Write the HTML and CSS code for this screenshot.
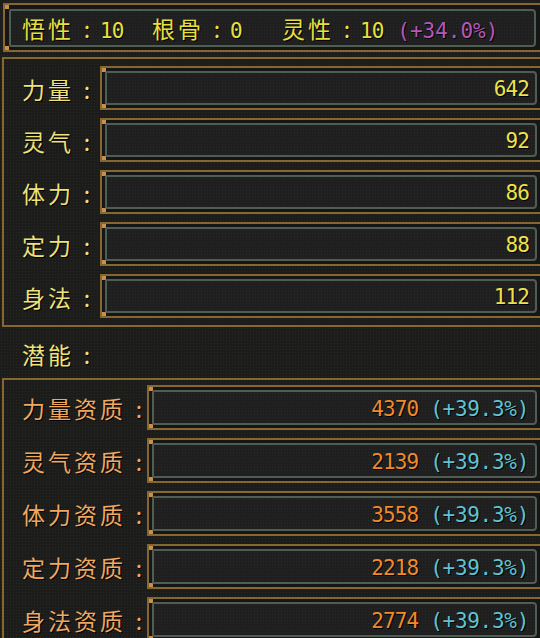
FILE: index.html
```html
<!DOCTYPE html>
<html lang="zh-CN">
<head>
    <meta charset="UTF-8">
    <meta name="viewport" content="width=device-width, initial-scale=1.0">
    <title>属性</title>
    <link rel="stylesheet" href="styles.css">
</head>
<body>
    <div class="screen">
        <div class="frame top-frame">
            <div class="frame-inner attrs">
                <span class="attr"><span class="cn">悟性<i>:</i></span><span class="num">10</span></span>
                <span class="attr"><span class="cn">根骨<i>:</i></span><span class="num">0</span></span>
                <span class="attr"><span class="cn">灵性<i>:</i></span><span class="num">10 <em class="purple">(+34.0%)</em></span></span>
            </div>
        </div>

        <section class="panel stats">
            <div class="row">
                <span class="label cn">力量<i>:</i></span>
                <div class="frame bar"><div class="frame-inner"><span class="num">642</span></div></div>
            </div>
            <div class="row">
                <span class="label cn">灵气<i>:</i></span>
                <div class="frame bar"><div class="frame-inner"><span class="num">92</span></div></div>
            </div>
            <div class="row">
                <span class="label cn">体力<i>:</i></span>
                <div class="frame bar"><div class="frame-inner"><span class="num">86</span></div></div>
            </div>
            <div class="row">
                <span class="label cn">定力<i>:</i></span>
                <div class="frame bar"><div class="frame-inner"><span class="num">88</span></div></div>
            </div>
            <div class="row">
                <span class="label cn">身法<i>:</i></span>
                <div class="frame bar"><div class="frame-inner"><span class="num">112</span></div></div>
            </div>
        </section>

        <div class="section-title cn">潜能<i>:</i></div>

        <section class="panel potential">
            <div class="row">
                <span class="label cn">力量资质<i>:</i></span>
                <div class="frame bar"><div class="frame-inner"><span class="num orange">4370</span><span class="num cyan">(+39.3%)</span></div></div>
            </div>
            <div class="row">
                <span class="label cn">灵气资质<i>:</i></span>
                <div class="frame bar"><div class="frame-inner"><span class="num orange">2139</span><span class="num cyan">(+39.3%)</span></div></div>
            </div>
            <div class="row">
                <span class="label cn">体力资质<i>:</i></span>
                <div class="frame bar"><div class="frame-inner"><span class="num orange">3558</span><span class="num cyan">(+39.3%)</span></div></div>
            </div>
            <div class="row">
                <span class="label cn">定力资质<i>:</i></span>
                <div class="frame bar"><div class="frame-inner"><span class="num orange">2218</span><span class="num cyan">(+39.3%)</span></div></div>
            </div>
            <div class="row">
                <span class="label cn">身法资质<i>:</i></span>
                <div class="frame bar"><div class="frame-inner"><span class="num orange">2774</span><span class="num cyan">(+39.3%)</span></div></div>
            </div>
        </section>
    </div>
</body>
</html>
```

FILE: styles.css
```css
html, body {
    margin: 0;
    padding: 0;
}

body {
    width: 540px;
    height: 638px;
    overflow: hidden;
    background-color: #1c1c1b;
    background-image: radial-gradient(rgba(255, 255, 255, 0.05) 1px, transparent 1px);
    background-size: 3px 3px;
}

.screen {
    width: 540px;
    padding-top: 3px;
}

.cn {
    font-family: "Noto Sans CJK SC", sans-serif;
    font-size: 23px;
    letter-spacing: 3px;
    line-height: 1;
    color: #efe27a;
    text-shadow: 1px 1px 0 #000;
    white-space: nowrap;
}

/* centred colon cell, like the full-width colon of the game font */
.cn i {
    display: inline-block;
    width: 26px;
    text-align: center;
    font-style: normal;
    letter-spacing: 0;
}

.num {
    font-family: "DejaVu Sans Mono", monospace;
    font-size: 21px;
    letter-spacing: -0.9px;
    line-height: 1;
    color: #efe04c;
    text-shadow: 1px 1px 0 #000;
    white-space: nowrap;
}

.num em {
    font-style: normal;
}

.purple {
    color: #b556b8;
    margin-left: 2px;
    letter-spacing: 0;
}

.orange {
    color: #f08a2a;
}

.cyan {
    color: #5ec3d3;
    margin-left: 12px;
    letter-spacing: -0.3px;
}

/* gold outer frame with green-grey inner frame */
.frame {
    box-sizing: border-box;
    display: flex;
    border: 2px solid #85672f;
    border-right: none;
    background:
        linear-gradient(#c8904e, #c8904e) 0 0 / 4px 4px no-repeat,
        linear-gradient(#c8904e, #c8904e) 0 100% / 4px 4px no-repeat,
        #151615;
}

.frame-inner {
    flex: 1;
    display: flex;
    align-items: center;
    border: 2px solid #4f5d53;
    border-radius: 2px 4px 4px 2px;
    background-color: #1e1f1e;
    background-image: radial-gradient(rgba(255, 255, 255, 0.045) 1px, transparent 1px);
    background-size: 3px 3px;
}

.top-frame {
    height: 49px;
    margin-left: 3px;
    padding: 4px 4px 3px 4px;
}

.attrs {
    display: grid;
    grid-template-columns: 130px 130px auto;
    padding-left: 11px;
    padding-top: 3px;
}

.attr .cn {
    color: #e9e03e;
}

.attr .num {
    color: #e9e03e;
}

.panel {
    box-sizing: border-box;
    margin-left: 2px;
    border: 2px solid #85672f;
    border-right: none;
    display: flex;
    flex-direction: column;
    padding-left: 18px;
}

.stats {
    margin-top: 5px;
    padding-top: 7px;
    padding-bottom: 7px;
    gap: 8px;
}

.stats .row {
    height: 44px;
}

.stats .label {
    width: 78px;
}

.potential {
    padding-top: 5px;
    gap: 8px;
}

.potential .row {
    height: 45px;
}

.potential .label {
    width: 125px;
    color: #f0a861;
}

.row {
    display: flex;
    align-items: center;
}

.row .label {
    flex: none;
    padding-top: 2px;
}

.bar {
    flex: 1;
    height: 100%;
    padding: 3px 3px 3px 3px;
}

.bar .frame-inner {
    justify-content: flex-end;
    padding-right: 6px;
    padding-top: 3px;
}

.section-title {
    height: 51px;
    display: flex;
    align-items: center;
    padding-left: 22px;
    padding-top: 3px;
    box-sizing: border-box;
}
```
